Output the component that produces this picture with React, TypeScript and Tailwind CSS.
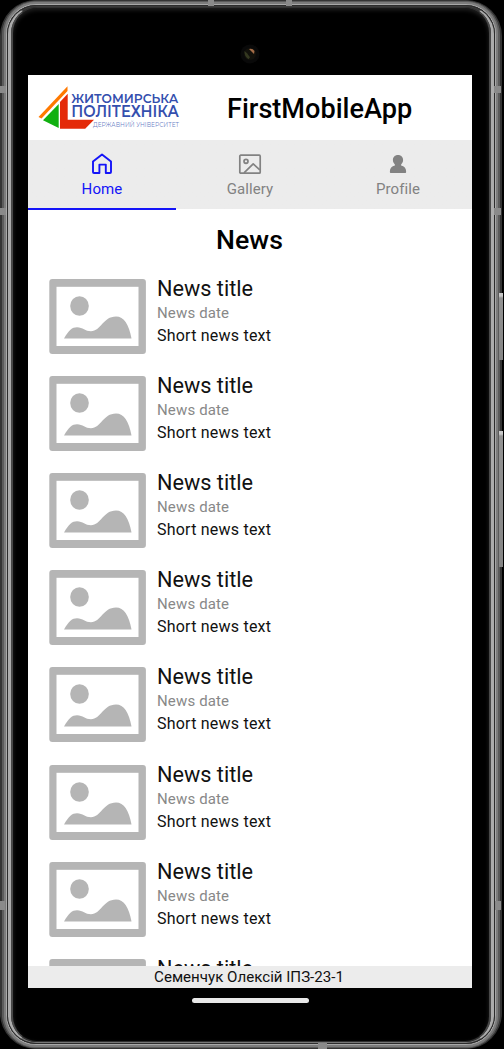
import React from "react";

const HomeIcon = () => (
  <svg width="22" height="22" viewBox="0 0 22 22" fill="none" stroke="#1414f8" strokeWidth="1.9" strokeLinejoin="round">
    <path d="M2 8.6 11 1.6l9 7v10.4q0 1-1 1h-4.2v-8.4H8.4v8.4H3q-1 0-1-1Z" />
  </svg>
);

const GalleryIcon = () => (
  <svg width="24" height="22" viewBox="0 0 24 22" fill="none" stroke="#828282" strokeWidth="1.7" strokeLinejoin="round">
    <rect x="1.8" y="2.2" width="20.4" height="18" rx="1" />
    <circle cx="8" cy="8.3" r="2" />
    <path d="m6 19.8 9.2-9 6.6 6" />
  </svg>
);

const ProfileIcon = () => (
  <svg width="20" height="22" viewBox="0 0 20 22" fill="#828282">
    <path d="M10 1.9c3.2 0 5.1 2.2 5.1 5.1 0 2-.9 3.3-2 4.5v1c3.2.7 5 2.9 5 5.7v1q0 .7-.7.7H2.600q-.7 0-.7-.7v-1c0-2.800 1.800-5 5-5.700v-1c-1.100-1.200-2-2.500-2-4.500 0-2.900 1.900-5.100 5.100-5.100Z" />
  </svg>
);

const Logo = () => (
  <svg className="mt-[10px] ml-2.5 shrink-0" width="143" height="46" viewBox="0 0 143 46">
    <path d="M0.500 32 29.500 1.200V6L3.500 33.500Z" fill="#ff7900" />
    <path d="M5 35.200 20.700 19V43Z" fill="#10b010" />
    <path d="M22 17 29.700 8.800V34.800H56L47.200 43.800H22Z" fill="#e42a08" />
    <g fill="#344fae" fontFamily="Montserrat, Inter, 'Liberation Sans', sans-serif">
      <text x="33.300" y="17.700" fontSize="13.300" fontWeight="600" textLength="107" lengthAdjust="spacingAndGlyphs">ЖИТОМИРСЬКА</text>
      <text x="33.300" y="32" fontSize="15.500" fontWeight="600" textLength="107.500" lengthAdjust="spacingAndGlyphs">ПОЛІТЕХНІКА</text>
      <text x="55" y="42.300" fontSize="7" fillOpacity=".75" textLength="86" lengthAdjust="spacingAndGlyphs">ДЕРЖАВНИЙ УНІВЕРСИТЕТ</text>
    </g>
  </svg>
);

const Placeholder = () => (
  <svg className="shrink-0" width="97" height="75" viewBox="0 0 97 75">
    <rect x=".3" width="96.600" height="75" rx="3" fill="#b5b5b5" />
    <rect x="7.500" y="7.800" width="82" height="59.200" fill="#fff" />
    <ellipse cx="30.500" cy="27" rx="9.300" ry="9.800" fill="#b5b5b5" />
    <path d="M15 59.500C20 51 23 48.200 28 48.200c6 0 8 4 14 4 10 0 12-14.700 25-14.700 8 0 13 8 15.500 22Z" fill="#b5b5b5" />
  </svg>
);

const tabs = [
  { label: "Home", icon: <HomeIcon />, active: true },
  { label: "Gallery", icon: <GalleryIcon />, active: false },
  { label: "Profile", icon: <ProfileIcon />, active: false },
];

const NewsItem = () => (
  <article className="flex h-[97.12px] shrink-0 gap-[11px]">
    <Placeholder />
    <div className="-mt-1 whitespace-nowrap">
      <h3 className="text-[21.7px] leading-7">News title</h3>
      <p className="text-[15px] leading-[21px] tracking-[0.15px] text-[#888888]">News date</p>
      <p className="text-[16px] leading-[23px] tracking-[0.22px]">Short news text</p>
    </div>
  </article>
);

const Screen = () => (
  <main className="flex h-[913px] w-[444px] shrink-0 flex-col overflow-hidden bg-white text-[#111]">
    <header className="flex h-[65px] shrink-0">
      <Logo />
      <h1 className="ml-[46px] pt-[16px] text-[27.1px] leading-9 font-medium text-black">FirstMobileApp</h1>
    </header>
    <nav className="grid h-[70px] shrink-0 grid-cols-3 bg-gradient-to-b from-[#ececec] from-[69px] to-white to-[69px]">
      {tabs.map((tab) => (
        <div
          key={tab.label}
          className={
            tab.active
              ? "flex flex-col items-center border-b-2 border-[#1414f8] pt-[13px] text-[#1414f8]"
              : "flex flex-col items-center pt-[13px] text-[#828282]"
          }
        >
          {tab.icon}
          <span className="text-[15px] leading-7 tracking-[0.1px]">{tab.label}</span>
        </div>
      ))}
    </nav>
    <section className="flex min-h-0 flex-1 flex-col overflow-hidden pl-[21px]">
      <h2 className="mr-[22px] h-[69px] shrink-0 pt-3 text-center text-[26.7px] leading-9 font-medium text-black">News</h2>
      {Array.from({ length: 8 }, (_, i) => (
        <NewsItem key={i} />
      ))}
    </section>
    <footer className="h-[22px] shrink-0 bg-[#ececec] pr-[2px] text-center text-[15.1px] leading-[23px]">
      Семенчук Олексій ІПЗ-23-1
    </footer>
  </main>
);

const Antenna = ({ place }: { place: string }) => <i className={"absolute bg-[#8a8a8a] " + place} />;

export default function App() {
  return (
    <div className="relative h-[1049px] w-[504px] overflow-hidden bg-black font-['Roboto',sans-serif]">
      <div className="h-[1049px] w-[502px] rounded-[36px] border-x-2 border-y border-[#343434] bg-[#555]">
        <div className="h-full rounded-[34px] border-x-2 border-y border-[#5b5b5b] bg-[#777]">
          <div className="h-full rounded-[32px] border-2 border-[#7c7c7c] bg-[#999]">
            <div className="h-full rounded-[30px] border border-[#a8a8a8] bg-[#303030]">
              <div className="h-full rounded-[29px] border border-[#2c2c2c] bg-[#303030]">
                <div className="h-full rounded-[28px] border-x-[3px] border-t border-b border-x-[#acacac] border-t-[#3c3c3c] border-b-[#777] bg-[#303030]">
                  <div className="h-full rounded-[26px] border-x-2 border-y border-x-[#484848] border-y-[#303030] bg-black shadow-[inset_0_2px_4px_#222]">
                    <div className="flex h-full flex-col items-center pt-[67px] pr-[2px]">
                      <Screen />
                      <div className="mt-[10px] h-[5px] w-[117px] shrink-0 rounded-full bg-[#e8e8e8]" />
                    </div>
                  </div>
                </div>
              </div>
            </div>
          </div>
        </div>
      </div>
      <svg className="absolute top-[43px] left-[239px]" width="22" height="22" viewBox="0 0 22 22">
        <circle cx="11" cy="11" r="9.500" fill="#090909" />
        <circle cx="11" cy="11" r="6" fill="#12110b" />
        <path d="M5.500 8q-.5 5 4 8.300l1.500-2-3-4Z" fill="#343820" />
        <path d="m10 6 5 5 .5-3q-2-3-5.500-2Z" fill="#a56d48" />
      </svg>
      <Antenna place="left-[208px] top-0 h-[6px] w-[6px]" />
      <Antenna place="left-[286px] top-0 h-[6px] w-[6px]" />
      <Antenna place="left-0 top-[86px] h-[7px] w-[6px]" />
      <Antenna place="left-0 top-[208px] h-[7px] w-[6px]" />
      <Antenna place="left-[494px] top-[86px] h-[7px] w-[7px]" />
      <Antenna place="left-[494px] top-[208px] h-[7px] w-[7px]" />
      <Antenna place="left-0 top-[901px] h-[9px] w-[5px]" />
      <Antenna place="left-[495px] top-[901px] h-[9px] w-[6px]" />
      <Antenna place="left-[318px] top-[1043px] h-[6px] w-[9px]" />
      <i className="absolute top-[293px] left-[499px] h-[67px] w-[4px] bg-gradient-to-b from-[#c8c8c8] from-[3px] via-[#929292] via-[5px] to-[#858585]" />
      <i className="absolute top-[431px] left-[499px] h-[136px] w-[4px] bg-gradient-to-b from-[#c8c8c8] from-[3px] via-[#929292] via-[5px] to-[#858585]" />
    </div>
  );
}
